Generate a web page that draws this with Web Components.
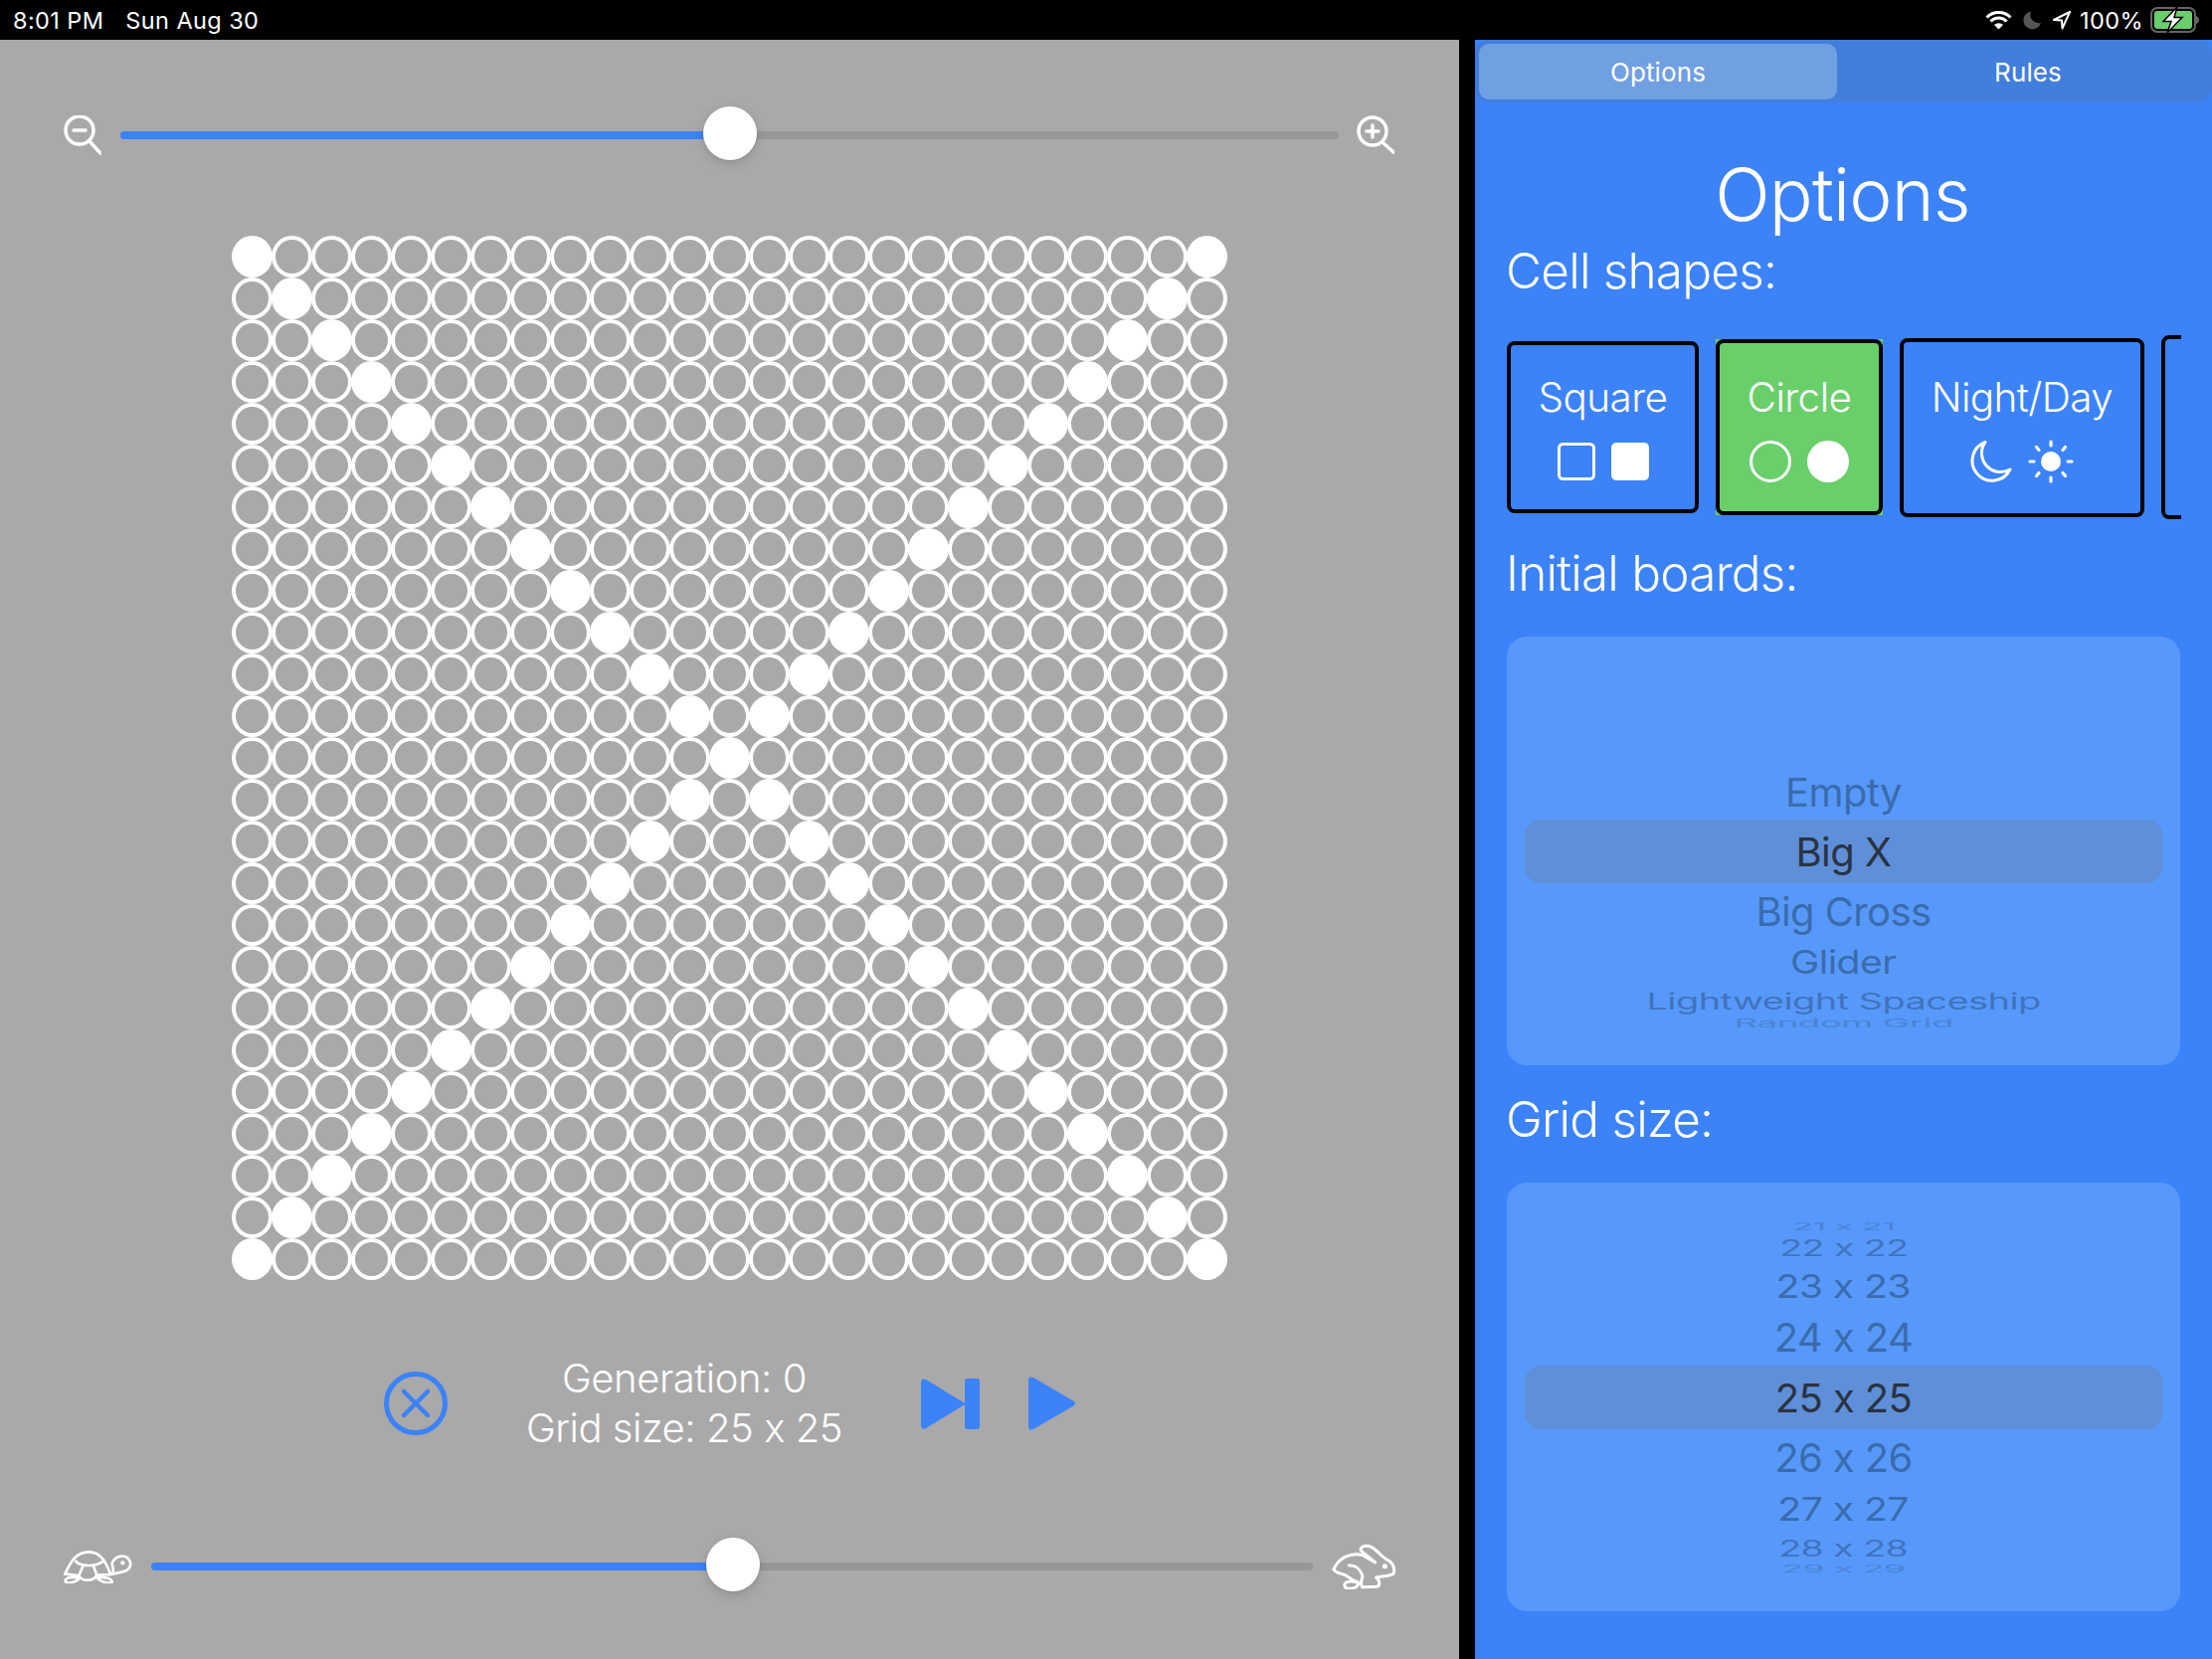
<!doctype html>
<html>
<head>
<meta charset="utf-8">
<title>Life</title>
<style>
  html, body { margin: 0; height: 100%; }
  body { font-family: Inter, "Liberation Sans", sans-serif; color: #fff; background: #000; overflow: hidden; }
</style>
</head>
<body>
<game-app></game-app>
<script>
(function() {
'use strict';

customElements.define('status-bar', class extends HTMLElement {
  constructor() {
    super();
    this.attachShadow({mode: 'open'}).innerHTML = `
      <style>
        :host { display: flex; align-items: center; height: 40px; background: #000; color: #fff;
                font-size: 23.500px; padding: 0 11px 0 13px; box-sizing: border-box; }
        .time { letter-spacing: .4px; }
        .date { margin-left: 22px; letter-spacing: .4px; }
        .right { margin-left: auto; display: flex; align-items: center; }
        svg { display: block; flex: none; }
      </style>
      <span class="time">8:01 PM</span><span class="date">Sun Aug 30</span>
      <div class="right">
        <svg width="27" height="20" viewBox="0 0 27 20" fill="none" stroke="#fff" stroke-width="3">
          <path d="M1.5 7.5A17 17 0 0 1 25.5 7.5"/><path d="M5.5 11.5A11 11 0 0 1 21.5 11.5"/>
          <path d="M9 15A6.5 6.5 0 0 1 18 15L13.5 19.5Z" fill="#fff" stroke="none"/>
        </svg>
        <svg style="margin-left:10px" width="20" height="20" viewBox="0 0 20 20">
          <path d="M9 1.5A9 9 0 1 0 19 13A8.5 8.5 0 0 1 9 1.5Z" fill="#555"/>
        </svg>
        <svg style="margin-left:10px" width="20" height="20" viewBox="0 0 20 20">
          <path d="M18 2L2 10L10 10.5L10.500 18.500Z" fill="none" stroke="#fff" stroke-width="2" stroke-linejoin="round"/>
        </svg>
        <span style="margin-left:8px;letter-spacing:.4px">100%</span>
        <svg style="margin-left:7px" width="51" height="26" viewBox="0 0 51 26">
          <rect x="1" y="1" width="44" height="24" rx="6" fill="none" stroke="#666" stroke-width="2"/>
          <rect x="4" y="4" width="38" height="18" rx="3" fill="#69cf6b"/>
          <path d="M46.500 9.500a4 4 0 0 1 0 7Z" fill="#666" stroke="#666"/>
          <path d="M27 0L13 14.500H21L17 26L32 10.500H24Z" fill="#fff" stroke="#000" stroke-width="1.500"/>
        </svg>
      </div>
    `;
  }
});

customElements.define('range-slider', class extends HTMLElement {
  constructor() {
    super();
    this.attachShadow({mode: 'open'}).innerHTML = `
      <style>
        :host { display: flex; align-items: center; height: 60px; }
        .track { position: relative; flex: 1; height: 8px; border-radius: 4px; background: #979797; }
        .fill { height: 8px; border-radius: 4px 0 0 4px; background: #3c82f9; }
        /* thumb sits over the track, a bit above its middle like the native one */
        .thumb { position: absolute; top: -25px; width: 54px; height: 54px; border-radius: 50%; background: #fff;
                 box-shadow: 0 4px 12px rgba(0,0,0,.13), 0 1px 3px rgba(0,0,0,.08); }
        ::slotted(svg) { display: block; flex: none; }
      </style>
      <slot name="min"></slot>
      <div class="track"><div class="fill"></div><div class="thumb"></div></div>
      <slot name="max"></slot>
    `;
  }
  connectedCallback() {
    let v = this.getAttribute('value');
    this.shadowRoot.querySelector('.fill').style.width = v + 'px';
    this.shadowRoot.querySelector('.thumb').style.left = v + 'px';
  }
});

customElements.define('life-board', class extends HTMLElement {
  constructor() {
    super();
    let n = 25, cells = '';
    for (let r = 0; r < n; r++) {
      for (let c = 0; c < n; c++) {
        cells += `<i class="${r === c || r + c === n - 1 ? 'on' : ''}"></i>`;
      }
    }
    this.attachShadow({mode: 'open'}).innerHTML = `
      <style>
        :host { display: grid; grid-template-columns: repeat(25, 40px); grid-auto-rows: 42px; width: 1000px; }
        i { display: block; box-sizing: border-box; width: 41px; height: 42px; margin-left: -.5px;
            border: 4px solid #fff; border-radius: 50%; }
        i.on { background: #fff; }
      </style>
      ${cells}
    `;
  }
});

customElements.define('play-controls', class extends HTMLElement {
  constructor() {
    super();
    this.attachShadow({mode: 'open'}).innerHTML = `
      <style>
        :host { display: flex; align-items: center; height: 70px; padding-left: 386px; }
        svg { display: block; flex: none; }
        .info { width: 320px; margin: 0 78px; text-align: center; font-size: 40px; font-weight: 300;
                line-height: 50px; white-space: nowrap; letter-spacing: -.45px; }
      </style>
      <svg width="64" height="64" viewBox="0 0 64 64" fill="none" stroke="#3c82f9" stroke-linecap="round">
        <circle cx="32" cy="32" r="29.500" stroke-width="5"/>
        <path d="M20 20L44 44M44 20L20 44" stroke-width="4.500"/>
      </svg>
      <div class="info">Generation: 0<br>Grid size: 25 x 25</div>
      <svg width="59" height="51" viewBox="0 0 59 51" fill="#3c82f9">
        <path d="M0 4Q0 -1 5 1L45 25.500L5 50Q0 52 0 47Z"/>
        <rect x="44" y="0" width="15" height="51" rx="3"/>
      </svg>
      <svg style="margin-left:49px" width="48" height="54" viewBox="0 0 48 54" fill="#3c82f9">
        <path d="M0 4Q0 -1 5 1L46 25Q48 27 46 29L5 53Q0 55 0 50Z"/>
      </svg>
    `;
  }
});

customElements.define('game-pane', class extends HTMLElement {
  constructor() {
    super();
    this.attachShadow({mode: 'open'}).innerHTML = `
      <style>
        :host { display: flex; flex: none; flex-direction: column; width: 1467px; background: #a9a9a9; }
        range-slider.zoom { margin: 66px 65px 0 64px; }
        life-board { margin: 71px 0 0 233px; }
        play-controls { margin-top: 89px; }
        range-slider.speed { margin: 99px 64px 0 64px; }
      </style>
      <range-slider class="zoom" value="586">
        <svg slot="min" style="margin-right:19px" width="38" height="40" viewBox="0 0 38 40" fill="none" stroke="#fff" stroke-width="3.500" stroke-linecap="round">
          <circle cx="16" cy="15" r="14"/><path d="M10 15H22"/><path d="M26 26L37 38"/>
        </svg>
        <svg slot="max" style="margin-left:16px" width="40" height="40" viewBox="0 0 40 40" fill="none" stroke="#fff" stroke-width="3.500" stroke-linecap="round">
          <circle cx="18" cy="16" r="14"/><path d="M12 16H24M18 10V22"/><path d="M28 27L39 37"/>
        </svg>
      </range-slider>
      <life-board></life-board>
      <play-controls></play-controls>
      <range-slider class="speed" value="558">
        <svg slot="min" style="margin-right:19px" width="69" height="33" viewBox="72 108 207 99" fill="none" stroke="#fff" stroke-width="8" stroke-linecap="round" stroke-linejoin="round">
          <path d="M76 178C90 150 105 112 148 112C185 112 200 145 212 176"/>
          <path d="M76 178L118 184C128 202 162 202 172 182L212 180C228 178 220 162 218 148C222 128 250 118 265 130C282 148 272 168 250 172C235 175 225 178 212 180"/>
          <path d="M108 140C120 155 170 160 194 138M130 155L118 184M162 155L172 182"/>
          <path d="M120 192C100 210 75 208 77 198C78 188 105 186 120 192Z"/>
          <path d="M172 190C190 208 218 208 218 202C216 192 195 186 172 190Z"/>
          <circle cx="250" cy="145" r="2.500" fill="#fff"/>
        </svg>
        <svg slot="max" style="margin-left:19px" width="64" height="46" viewBox="56 90 192 138" fill="none" stroke="#fff" stroke-width="9" stroke-linecap="round" stroke-linejoin="round">
          <path d="M62 168C75 135 110 115 150 125L187 147L145 112C138 100 158 92 175 100C195 110 205 130 225 140C245 150 248 175 240 182C225 190 205 188 190 192C200 200 205 218 190 220L148 221C138 205 152 195 148 185C140 165 130 155 108 155"/>
          <path d="M62 168C70 182 90 178 105 190C115 198 125 203 135 207C110 200 92 205 95 218C100 232 135 226 136 210"/>
          <circle cx="216" cy="158" r="3" fill="#fff"/>
        </svg>
      </range-slider>
    `;
  }
});

customElements.define('tab-bar', class extends HTMLElement {
  constructor() {
    super();
    this.attachShadow({mode: 'open'}).innerHTML = `
      <style>
        :host { display: flex; height: 63px; box-sizing: border-box; padding: 4px; background: #427edc;
                border-radius: 14px; font-size: 26px; letter-spacing: .1px; }
        div { display: flex; align-items: center; justify-content: center; height: 56px; }
        .on { flex: none; width: 360px; background: #709fe2; border-radius: 10px; }
        .off { flex: 1; padding-left: 11px; }
      </style>
      <div class="on">Options</div><div class="off">Rules</div>
    `;
  }
});

customElements.define('shape-card', class extends HTMLElement {
  constructor() {
    super();
    this.attachShadow({mode: 'open'}).innerHTML = `
      <style>
        :host { display: block; flex: none; font-size: 40.500px; font-weight: 300; letter-spacing: -.6px; }
        /* the fill of the selected card is square, it shows past the round border */
        :host([selected]) { background: #69cf6b; }
        .box { display: flex; flex-direction: column; align-items: center; justify-content: center;
               box-sizing: border-box; height: 100%; padding-top: 1px; border: 4px solid #000; border-radius: 8px; }
        .name { height: 50px; line-height: 50px; }
        .icons { display: flex; align-items: center; height: 44px; margin-top: 17px; }
      </style>
      <div class="box">
        <div class="name"><slot></slot></div>
        <div class="icons"><slot name="icons"></slot></div>
      </div>
    `;
  }
});

customElements.define('wheel-picker', class extends HTMLElement {
  constructor() {
    super();
    this.attachShadow({mode: 'open'}).innerHTML = `
      <style>
        :host { display: block; height: 431px; box-sizing: border-box; overflow: hidden;
                background: #5799fa; border-radius: 20px; font-size: 40px; letter-spacing: -.6px; }
        .row { display: flex; align-items: center; justify-content: center; white-space: nowrap; overflow: hidden; }
        .row span { display: block; }
        .row.sel { margin: 0 18px; border-radius: 16px; background: #5f8fd8; color: #2a3340; overflow: visible; }
      </style>
      <div class="rows"></div>
    `;
  }
  connectedCallback() {
    // each item: text, row height, scaleX, scaleY, colour (no colour = selected row)
    let items = JSON.parse(this.getAttribute('items'));
    let rows = this.shadowRoot.querySelector('.rows');
    rows.style.paddingTop = this.getAttribute('pad') + 'px';
    for (let it of items) {
      let row = document.createElement('div');
      row.className = 'row' + (it[4] ? '' : ' sel');
      row.style.height = it[1] + 'px';
      let s = document.createElement('span');
      s.textContent = it[0];
      s.style.transform = `scale(${it[2]}, ${it[3]})`;
      if (it[4]) s.style.color = it[4];
      row.appendChild(s);
      rows.appendChild(row);
    }
  }
});

customElements.define('options-pane', class extends HTMLElement {
  constructor() {
    super();
    let m = '#3a6cad', m2 = '#3f74bd', m3 = '#4a83d6';
    let boards = JSON.stringify([
      ['Empty', 55, 1, 1, m],
      ['Big X', 64, 1, 1, ''],
      ['Big Cross', 56, 1, 1, m],
      ['Glider', 46, .98, .82, m],
      ['Lightweight Spaceship', 33, .95, .56, m2],
      ['Random Grid', 10, .92, .3, m3]
    ]);
    let sizes = JSON.stringify([
      ['21 x 21', 10, .85, .26, m3],
      ['22 x 22', 32, .94, .56, m2],
      ['23 x 23', 46, .98, .82, m],
      ['24 x 24', 57, 1, 1, m],
      ['25 x 25', 64, 1, 1, ''],
      ['26 x 26', 56, 1, 1, m],
      ['27 x 27', 48, .98, .82, m],
      ['28 x 28', 30, .94, .56, m2],
      ['29 x 29', 12, .9, .26, m3]
    ]);
    this.attachShadow({mode: 'open'}).innerHTML = `
      <style>
        :host { display: block; flex: 1; min-width: 0; margin-left: 16px; background: #3c82f9; height: 1628px; }
        h1 { margin: 47px 0 0; padding-right: 2px; height: 92px; line-height: 92px; text-align: center; font-size: 73px; font-weight: 300; letter-spacing: -.8px; }
        h2 { margin: 24px 32px 34px 31px; height: 60px; line-height: 60px; font-size: 49.500px; font-weight: 350; letter-spacing: -.8px; }
        h2.first { margin-top: 0; margin-bottom: 35px; }
        .cards { display: flex; align-items: center; gap: 17px; height: 185px; margin: 0 31px 0 32px; overflow: hidden; }
        .cards svg { display: block; flex: none; }
        wheel-picker { margin: 0 32px 0 32px; }
      </style>
      <tab-bar></tab-bar>
      <h1>Options</h1>
      <h2 class="first">Cell shapes:</h2>
      <div class="cards">
        <shape-card style="width:193px;height:173px">Square
          <svg slot="icons" width="92" height="38" viewBox="0 0 92 38">
            <rect x="1.500" y="1.500" width="35" height="35" rx="4" fill="none" stroke="#fff" stroke-width="3"/>
            <rect x="54" width="38" height="38" rx="5" fill="#fff"/>
          </svg>
        </shape-card>
        <shape-card selected style="width:168px;height:177px">Circle
          <svg slot="icons" width="100" height="42" viewBox="0 0 100 42">
            <circle cx="21" cy="21" r="19.500" fill="none" stroke="#fff" stroke-width="3"/>
            <circle cx="79" cy="21" r="21" fill="#fff"/>
          </svg>
        </shape-card>
        <shape-card style="width:246px;height:180px">Night/Day
          <svg slot="icons" width="104" height="44" viewBox="0 0 104 44">
            <path d="M15 2.500A20 20 0 1 0 40 30A19 19 0 0 1 15 2.500Z" fill="none" stroke="#fff" stroke-width="3" stroke-linejoin="round"/>
            <g stroke="#fff" stroke-width="3.200" stroke-linecap="round">
              <circle cx="81" cy="22" r="10" fill="#fff" stroke="none"/>
              <path d="M81 2V6M81 38V42M60 22H64M98 22H102M66.500 7.500L69 10.500M93 33.500L95.500 36.500M95.500 7.500L93 10.500M69 33.500L66.500 36.500"/>
            </g>
          </svg>
        </shape-card>
        <shape-card style="width:200px;height:185px"></shape-card>
      </div>
      <h2>Initial boards:</h2>
      <wheel-picker pad="129" items='${boards}'></wheel-picker>
      <h2>Grid size:</h2>
      <wheel-picker pad="39" items='${sizes}'></wheel-picker>
    `;
  }
});

customElements.define('game-app', class extends HTMLElement {
  constructor() {
    super();
    this.attachShadow({mode: 'open'}).innerHTML = `
      <style>
        :host { display: block; width: 2224px; height: 1668px; background: #000; overflow: hidden; }
        .main { display: flex; height: 1628px; }
      </style>
      <status-bar></status-bar>
      <div class="main">
        <game-pane></game-pane>
        <options-pane></options-pane>
      </div>
    `;
  }
});

})();
</script>
</body>
</html>
